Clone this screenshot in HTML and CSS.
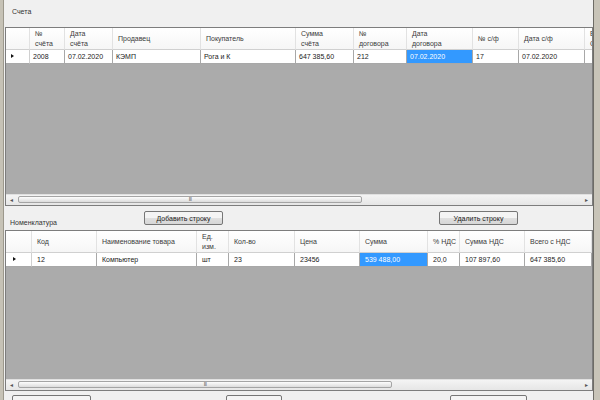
FILE: index.html
```html
<!DOCTYPE html>
<html lang="ru">

<head>
    <meta charset="UTF-8" />
    <title>Счета</title>
    <link rel="stylesheet" href="styles.css">
</head>

<body>
    <div class="window">
        <div class="frame-left"></div>

        <div class="form">
            <div class="cap">Счета</div>

            <!-- таблица счетов -->
            <div class="grid g1">
                <div class="view">
                    <div class="row head">
                        <div class="c a24"></div>
                        <div class="c a35">№<br>счёта</div>
                        <div class="c a48">Дата<br>счёта</div>
                        <div class="c a88">Продавец</div>
                        <div class="c a95">Покупатель</div>
                        <div class="c a58">Сумма<br>счёта</div>
                        <div class="c a53">№<br>договора</div>
                        <div class="c a66">Дата<br>договора</div>
                        <div class="c a46">№ с/ф</div>
                        <div class="c a66">Дата с/ф</div>
                        <div class="c a55">Вид<br>Сделки</div>
                    </div>
                    <div class="row data">
                        <div class="c a24 rh"><span class="tri"></span></div>
                        <div class="c a35">2008</div>
                        <div class="c a48">07.02.2020</div>
                        <div class="c a88">КЭМП</div>
                        <div class="c a95">Рога и К</div>
                        <div class="c a58">647 385,60</div>
                        <div class="c a53">212</div>
                        <div class="c a66 sel">07.02.2020</div>
                        <div class="c a46">17</div>
                        <div class="c a66">07.02.2020</div>
                        <div class="c a55"></div>
                    </div>
                </div>
                <div class="hscroll">
                    <div class="arr">&#9666;</div>
                    <div class="track"><div class="thumb t1">III</div></div>
                    <div class="arr">&#9656;</div>
                </div>
            </div>

            <div class="mid">
                <div class="cap2">Номенклатура</div>
                <button class="btn">Добавить строку</button>
                <div></div>
                <button class="btn">Удалить строку</button>
            </div>

            <!-- номенклатура -->
            <div class="grid g2">
                <div class="view">
                    <div class="row head">
                        <div class="c a26"></div>
                        <div class="c a65">Код</div>
                        <div class="c a100">Наименование товара</div>
                        <div class="c a32">Ед.<br>изм.</div>
                        <div class="c a66">Кол-во</div>
                        <div class="c a65">Цена</div>
                        <div class="c a68">Сумма</div>
                        <div class="c a32">% НДС</div>
                        <div class="c a65">Сумма НДС</div>
                        <div class="c a67">Всего с НДС</div>
                    </div>
                    <div class="row data">
                        <div class="c a26 rh"><span class="tri"></span></div>
                        <div class="c a65">12</div>
                        <div class="c a100">Компьютер</div>
                        <div class="c a32">шт</div>
                        <div class="c a66">23</div>
                        <div class="c a65">23456</div>
                        <div class="c a68 sel">539 488,00</div>
                        <div class="c a32">20,0</div>
                        <div class="c a65">107 897,60</div>
                        <div class="c a67">647 385,60</div>
                    </div>
                </div>
                <div class="hscroll">
                    <div class="arr">&#9666;</div>
                    <div class="track"><div class="thumb t2">III</div></div>
                    <div class="arr">&#9656;</div>
                </div>
            </div>

            <div class="bottom">
                <button class="btn b1">Сохранить</button>
                <button class="btn b2">Печать</button>
                <button class="btn b3">Закрыть</button>
            </div>
        </div>

        <div class="frame-right"></div>
    </div>
</body>

</html>
```

FILE: styles.css
```css
body {
    margin: 0;
    overflow: hidden;
    font-family: "Liberation Sans", Arial, sans-serif;
    font-size: 7px;
    color: #222;
    background: #f0f0f0;
}

.window {
    display: flex;
    width: 600px;
    height: 400px;
    overflow: hidden;
}

.frame-left {
    width: 3px;
    background: #c6c2b6;
    border-right: 1px solid #9c988c;
}

.frame-right {
    width: 6px;
    background: #c8c4b8;
    border-left: 1px solid #6e6c66;
}

.form {
    width: 589px;
    background: #f0f0f0;
    display: flex;
    flex-direction: column;
}

.form > * {
    flex-shrink: 0;
}

.cap {
    height: 27px;
    box-sizing: border-box;
    padding: 7px 0 0 8px;
    line-height: 10px;
    color: #333;
}

.grid {
    margin-left: 1px;
    width: 588px;
    box-sizing: border-box;
    border: 1px solid #7d7d7d;
    display: flex;
    flex-direction: column;
}

.g1 {
    height: 179px;
}

.g2 {
    height: 161px;
}

.view {
    flex: 1;
    background: #ababab;
    overflow: hidden;
}

.row {
    display: flex;
}

.c {
    flex-shrink: 0;
    box-sizing: border-box;
    overflow: hidden;
    white-space: nowrap;
}

.head .c {
    height: 22px;
    padding: 0 5px;
    background: linear-gradient(#ffffff, #f6f6f6);
    border-right: 1px solid #e2e2e2;
    border-bottom: 1px solid #d0d0d0;
    line-height: 10px;
    color: #3a3a3a;
    display: flex;
    align-items: center;
}

.data .c {
    height: 14px;
    padding: 0 3px;
    background: #fff;
    border-right: 1px solid #a8a8a8;
    border-bottom: 1px solid #a8a8a8;
    line-height: 13px;
}

.g2 .data .c {
    padding-left: 5px;
}

.data .rh {
    border-right-color: #d0d0d0;
}

.data .sel {
    background: #3399ff;
    color: #fff;
}

.tri {
    display: inline-block;
    margin: 4px 0 0 2px;
    border-left: 3px solid #111;
    border-top: 2.5px solid transparent;
    border-bottom: 2.5px solid transparent;
    vertical-align: top;
}

/* ширины колонок */
.a24 { width: 24px; }
.a26 { width: 26px; }
.a32 { width: 32px; }
.a35 { width: 35px; }
.a46 { width: 46px; }
.a48 { width: 48px; }
.a53 { width: 53px; }
.a55 { width: 55px; }
.a58 { width: 58px; }
.a65 { width: 65px; }
.a66 { width: 66px; }
.a67 { width: 67px; }
.a68 { width: 68px; }
.a88 { width: 88px; }
.a95 { width: 95px; }
.a100 { width: 100px; }

.hscroll {
    height: 11px;
    display: flex;
    background: linear-gradient(#f4f4f4, #e6e6e6);
    border-top: 1px solid #e0e0e0;
    box-sizing: border-box;
}

.arr {
    width: 11px;
    text-align: center;
    font-size: 6px;
    line-height: 10px;
    color: #555;
}

.track {
    flex: 1;
    padding: 1px 0 0 1px;
}

.thumb {
    height: 7px;
    box-sizing: border-box;
    border: 1px solid #a4a4a4;
    border-radius: 2px;
    background: linear-gradient(#fdfdfd, #dcdcdc);
    text-align: center;
    font-size: 5px;
    line-height: 5px;
    color: #555;
    letter-spacing: -0.5px;
}

.t1 { width: 344px; }
.t2 { width: 374px; }

.mid {
    height: 24px;
    display: grid;
    grid-template-columns: 140px 79px 216px 79px;
}

.cap2 {
    align-self: end;
    padding: 0 0 2px 6px;
    line-height: 10px;
    color: #333;
}

.btn {
    margin-top: 5px;
    height: 14px;
    padding: 0;
    border: 1px solid #767676;
    border-radius: 2px;
    background: linear-gradient(#f4f4f4 50%, #e0e0e0 50%, #d6d6d6);
    font-family: "Liberation Sans", Arial, sans-serif;
    font-size: 7px;
    color: #222;
}

.bottom {
    display: flex;
    padding-left: 8px;
}

.bottom .btn {
    margin-top: 4px;
}

.b1 { width: 79px; }
.b2 { width: 56px; margin-left: 135px; }
.b3 { width: 77px; margin-left: 168px; }
```
